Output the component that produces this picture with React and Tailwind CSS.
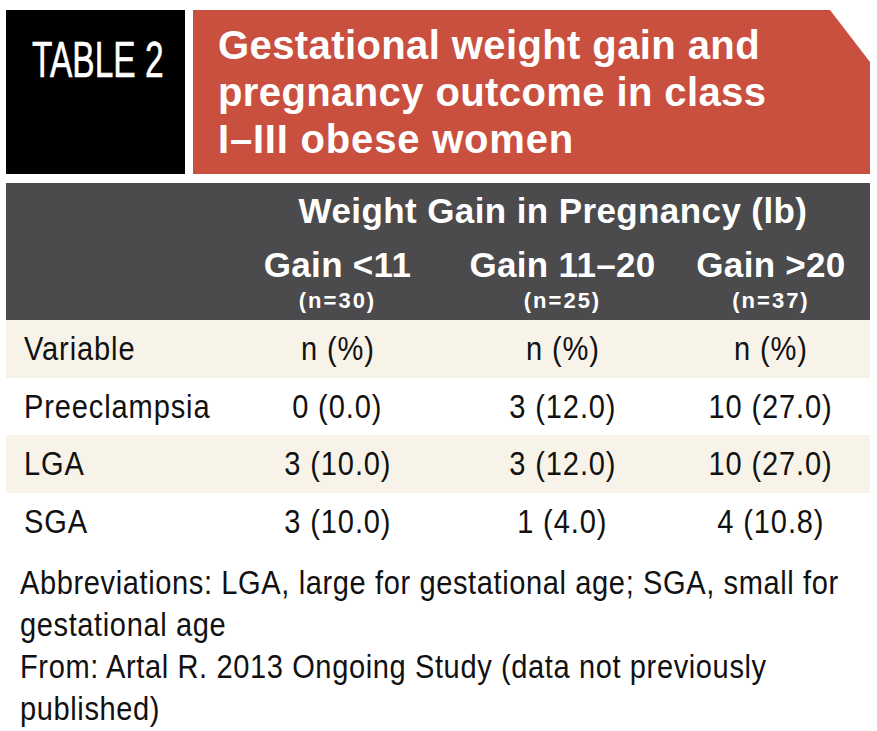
import React from "react";

const rows = [
  { label: "Variable", v: ["n (%)", "n (%)", "n (%)"], cream: true, h: "h-[58px]" },
  { label: "Preeclampsia", v: ["0 (0.0)", "3 (12.0)", "10 (27.0)"], cream: false, h: "h-[57px]" },
  { label: "LGA", v: ["3 (10.0)", "3 (12.0)", "10 (27.0)"], cream: true, h: "h-[58px]" },
  { label: "SGA", v: ["3 (10.0)", "1 (4.0)", "4 (10.8)"], cream: false, h: "h-[57px]" },
];

const grid = "grid grid-cols-[224px_215px_235px_182px] pr-2";

function Narrow({ children, origin = "origin-left" }) {
  return (
    <span className={`inline-block whitespace-nowrap scale-x-[0.88] ${origin}`}>{children}</span>
  );
}

export default function App() {
  return (
    <div className="w-[877px] h-[731px] bg-white pl-[6px] pt-[10px] overflow-hidden" style={{ fontFamily: '"Liberation Sans", Arial, sans-serif' }}>
      <div className="w-[864px]">
        {/* Title header */}
        <div className="flex gap-2 h-[164px]">
          <div className="w-[179px] bg-black pt-[22px] pl-[26px]">
            <span className="inline-block origin-left scale-x-[0.67] text-white text-[50px] leading-[56px] whitespace-nowrap [-webkit-text-stroke:0.6px_white]">TABLE 2</span>
          </div>
          <div className="flex-1 bg-[#c9503f] pt-[12px] pl-[25px] [clip-path:polygon(0_0,637px_0,100%_52px,100%_100%,0_100%)]">
            <div className="text-white font-bold text-[40px] leading-[47px] tracking-[0.4px] whitespace-nowrap">
              <div>Gestational weight gain and</div>
              <div>pregnancy outcome in class</div>
              <div className="tracking-[0.8px]">I–III obese women</div>
            </div>
          </div>
        </div>

        {/* Dark column header */}
        <div className="mt-[9px] h-[137px] bg-[#4b4a4c] text-white font-bold">
          <div className={grid}>
            <div />
            <div className="col-span-3 pl-[14px] pt-[8px] text-center text-[35px] leading-[40px] tracking-[0.4px] whitespace-nowrap">
              Weight Gain in Pregnancy (lb)
            </div>
          </div>
          <div className={grid + " mt-[14px]"}>
            <div />
            {[["Gain <11", "(n=30)"], ["Gain 11–20", "(n=25)"], ["Gain >20", "(n=37)"]].map(([a, b]) => (
              <div key={a} className="text-center">
                <div className="text-[35px] leading-[40px] tracking-[0.3px] whitespace-nowrap">{a}</div>
                <div className="mt-[4px] text-[22px] leading-[24px] tracking-[2px]">{b}</div>
              </div>
            ))}
          </div>
        </div>

        {/* Body rows */}
        {rows.map((r) => (
          <div key={r.label} className={`${grid} ${r.h} items-center ${r.cream ? "bg-[#f7f3e8]" : "bg-white"} text-[#111] text-[33px] leading-[40px] tracking-[1px]`}>
            <div className="pl-[18px]"><Narrow>{r.label}</Narrow></div>
            {r.v.map((v, i) => (
              <div key={i} className="text-center"><Narrow origin="origin-center">{v}</Narrow></div>
            ))}
          </div>
        ))}

        {/* Footnote */}
        <div className="pt-[12px] pl-[14px] text-[#111] text-[33px] leading-[42px] tracking-[0.7px]">
          <div><Narrow>Abbreviations: LGA, large for gestational age; SGA, small for</Narrow></div>
          <div><Narrow>gestational age</Narrow></div>
          <div><Narrow>From: Artal R. 2013 Ongoing Study (data not previously</Narrow></div>
          <div><Narrow>published)</Narrow></div>
        </div>
      </div>
    </div>
  );
}
